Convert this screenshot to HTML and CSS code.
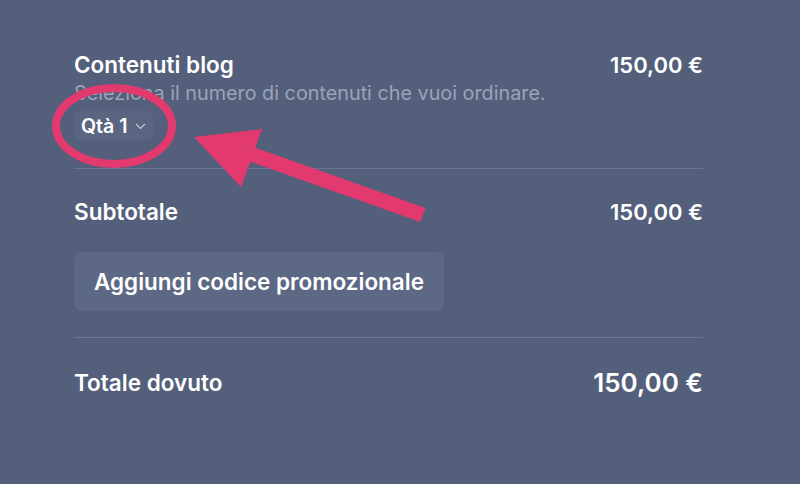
FILE: index.html
```html
<!DOCTYPE html>
<html lang="it">
<head>
<meta charset="utf-8">
<link rel="stylesheet" href="styles.css">
</head>
<body>
<div class="page">
  <section class="item">
    <div class="row">
      <div class="item-info">
        <div class="title">Contenuti blog</div>
        <div class="desc">Seleziona il numero di contenuti che vuoi ordinare.</div>
        <button class="qty">Qtà 1 <svg class="chev" width="11" height="7" viewBox="0 0 11 7"><path d="M1 1l4.5 4.5 4.5-4.5" fill="none" stroke="#c3c9d6" stroke-width="1.2"/></svg></button>
      </div>
      <div class="price">150,00 €</div>
    </div>
  </section>
  <section class="sub">
    <div class="row">
      <div class="label">Subtotale</div>
      <div class="price">150,00 €</div>
    </div>
    <button class="promo">Aggiungi codice promozionale</button>
  </section>
  <section class="total">
    <div class="row">
      <div class="label">Totale dovuto</div>
      <div class="price big">150,00 €</div>
    </div>
  </section>
</div>
<svg class="annot" width="800" height="484" viewBox="0 0 800 484">
  <ellipse cx="114" cy="126" rx="58" ry="38" fill="none" stroke="#e23a6e" stroke-width="8"/>
  <path d="M423 215 L248 153" stroke="#e23a6e" stroke-width="15" fill="none"/>
  <polygon points="194,137 262,129 241,187" fill="#e23a6e"/>
</svg>
</body>
</html>
```
FILE: styles.css
```css
html, body {
  margin: 0;
  padding: 0;
  background: #545f7b;
}
body {
  width: 800px;
  height: 484px;
  overflow: hidden;
  position: relative;
  font-family: Inter, "Noto Sans", sans-serif;
  color: #ffffff;
}
.page {
  width: 629px;
  margin-left: 74px;
  padding-top: 50px;
}
.row {
  display: flex;
  justify-content: space-between;
  align-items: flex-start;
}
.item {
  padding-bottom: 28px;
  border-bottom: 1px solid #6b7693;
}
.title {
  font-size: 22.5px;
  font-weight: 600;
  line-height: 30px;
}
.desc {
  font-size: 19.8px;
  line-height: 26px;
  color: #9ba4b9;
  white-space: nowrap;
}
.qty {
  margin-top: 5px;
  display: inline-flex;
  align-items: center;
  gap: 8px;
  height: 29px;
  padding: 0 7px;
  border: none;
  border-radius: 5px;
  background: #5a6581;
  color: #fff;
  font-family: inherit;
  font-size: 19.5px;
  font-weight: 600;
}
.chev { margin-top: 2px; }
.price {
  font-size: 22px;
  font-weight: 600;
  line-height: 30px;
}
.price.big { font-size: 26px; }
.sub {
  padding-top: 28px;
  padding-bottom: 26px;
  border-bottom: 1px solid #6b7693;
}
.label {
  font-size: 22.5px;
  font-weight: 600;
  line-height: 30px;
}
.promo {
  margin-top: 25px;
  height: 59px;
  border: none;
  border-radius: 8px;
  background: #5d6884;
  color: #fff;
  font-family: inherit;
  font-size: 22.5px;
  font-weight: 600;
  padding: 0 20px;
}
.total {
  padding-top: 30px;
}
.annot {
  position: absolute;
  left: 0;
  top: 0;
}
```
